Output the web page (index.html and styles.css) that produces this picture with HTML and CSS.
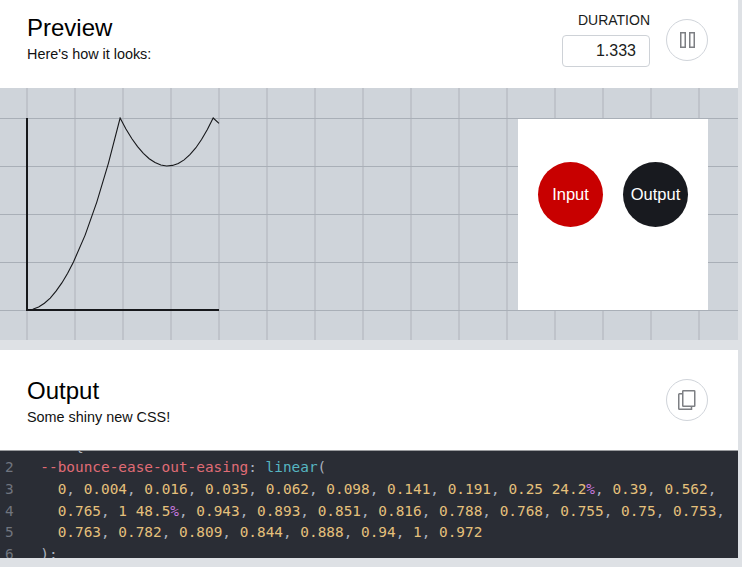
FILE: index.html
```html
<!DOCTYPE html>
<html lang="en">
<head>
<meta charset="utf-8">
<title>Preview</title>
<link rel="stylesheet" href="styles.css">
</head>
<body>
<main class="page">
  <section class="panel panel-preview">
    <header class="panel-head">
      <div class="heading">
        <h2>Preview</h2>
        <p>Here's how it looks:</p>
      </div>
      <div class="controls">
        <label class="duration">
          <span>DURATION</span>
          <input type="text" value="1.333">
        </label>
        <button class="round-btn" aria-label="Pause">
          <svg width="16" height="16" viewBox="0 0 16 16" fill="none" stroke="#7d7f83" stroke-width="1.5">
            <rect x="1.75" y="0.75" width="4.5" height="14.5"/>
            <rect x="10.75" y="0.75" width="4.5" height="14.5"/>
          </svg>
        </button>
      </div>
    </header>
    <div class="stage">
      <svg class="chart" width="194" height="194" viewBox="-1 -1 194 194" fill="none">
        <polyline class="curve" points="0,192 5.81,191.23 11.62,188.93 17.42,185.28 23.23,180.1 29.04,173.18 34.85,164.93 40.66,155.33 46.46,144 58.13,117.12 69.79,84.1 81.46,45.12 93.12,0 98.94,10.94 104.75,20.54 110.57,28.61 116.38,35.33 122.2,40.7 128.02,44.54 133.83,47.04 139.65,48 145.46,47.42 151.28,45.5 157.1,41.86 162.91,36.67 168.73,29.95 174.54,21.5 180.36,11.52 186.18,0 192,5.38"/>
        <path class="axes" d="M0 0V192H192"/>
      </svg>
      <div class="demo">
        <div class="ball ball-in">Input</div>
        <div class="ball ball-out">Output</div>
      </div>
    </div>
  </section>

  <section class="panel panel-output">
    <header class="panel-head panel-head-output">
      <div class="heading">
        <h2>Output</h2>
        <p>Some shiny new CSS!</p>
      </div>
      <button class="round-btn" aria-label="Copy">
        <svg width="20" height="22" viewBox="0 0 20 22" fill="none" stroke="#7d7f83" stroke-width="1.5">
          <rect x="5.75" y="1.75" width="12" height="15.5" rx="0.6"/>
          <path d="M5 4.75H2.5a0.75 0.75 0 0 0-.75.75V19.5a0.75 0.75 0 0 0 .75.75H14.5V18"/>
        </svg>
      </button>
    </header>
    <div class="code">
      <div class="code-scroll">
        <div class="line"><span class="num">1</span><span class="src"><span class="sel">:root</span> <span class="pun">{</span></span></div>
        <div class="line"><span class="num">2</span><span class="src">  <span class="prop">--bounce-ease-out-easing</span><span class="pun">:</span> <span class="fn">linear</span><span class="pun">(</span></span></div>
        <div class="line"><span class="num">3</span><span class="src">    <span class="val">0</span><span class="pun">,</span> <span class="val">0.004</span><span class="pun">,</span> <span class="val">0.016</span><span class="pun">,</span> <span class="val">0.035</span><span class="pun">,</span> <span class="val">0.062</span><span class="pun">,</span> <span class="val">0.098</span><span class="pun">,</span> <span class="val">0.141</span><span class="pun">,</span> <span class="val">0.191</span><span class="pun">,</span> <span class="val">0.25 24.2</span><span class="unit">%</span><span class="pun">,</span> <span class="val">0.39</span><span class="pun">,</span> <span class="val">0.562</span><span class="pun">,</span></span></div>
        <div class="line"><span class="num">4</span><span class="src">    <span class="val">0.765</span><span class="pun">,</span> <span class="val">1 48.5</span><span class="unit">%</span><span class="pun">,</span> <span class="val">0.943</span><span class="pun">,</span> <span class="val">0.893</span><span class="pun">,</span> <span class="val">0.851</span><span class="pun">,</span> <span class="val">0.816</span><span class="pun">,</span> <span class="val">0.788</span><span class="pun">,</span> <span class="val">0.768</span><span class="pun">,</span> <span class="val">0.755</span><span class="pun">,</span> <span class="val">0.75</span><span class="pun">,</span> <span class="val">0.753</span><span class="pun">,</span></span></div>
        <div class="line"><span class="num">5</span><span class="src">    <span class="val">0.763</span><span class="pun">,</span> <span class="val">0.782</span><span class="pun">,</span> <span class="val">0.809</span><span class="pun">,</span> <span class="val">0.844</span><span class="pun">,</span> <span class="val">0.888</span><span class="pun">,</span> <span class="val">0.94</span><span class="pun">,</span> <span class="val">1</span><span class="pun">,</span> <span class="val">0.972</span></span></div>
        <div class="line"><span class="num">6</span><span class="src">  <span class="pun">);</span></span></div>
      </div>
    </div>
  </section>
</main>
</body>
</html>
```

FILE: styles.css
```css
* { box-sizing: border-box; }

html, body {
  margin: 0;
  height: 100%;
  overflow: hidden;
  background: #dee1e5;
  font-family: "Liberation Sans", Arial, sans-serif;
  color: #000;
}

.page {
  display: flex;
  flex-direction: column;
  gap: 10px;
  width: 738px;
}

.panel-head {
  display: flex;
  justify-content: space-between;
  align-items: flex-start;
  height: 88px;
  padding: 12px 30px 0 27px;
  background: #fff;
}

.panel-head-output {
  height: 101px;
  padding-top: 25px;
  border-bottom: 1px solid #9a9c9f;
}

.heading h2 {
  margin: 0;
  font-size: 24px;
  font-weight: 400;
  line-height: 32px;
}

.heading p {
  margin: 0;
  font-size: 14.4px;
  line-height: 20px;
  color: #111;
}

.controls {
  display: flex;
  gap: 16px;
  align-items: center;
}

.duration {
  display: flex;
  flex-direction: column;
  align-items: flex-end;
  gap: 6px;
  font-size: 14px;
  line-height: 17px;
  color: #1a1c20;
}

.duration input {
  width: 88px;
  height: 32px;
  padding: 0 13px;
  border: 1px solid #ced2d7;
  border-radius: 4px;
  background: #fff;
  font: 16px "Liberation Sans", Arial, sans-serif;
  color: #1a1c20;
  text-align: right;
}

.round-btn {
  display: flex;
  align-items: center;
  justify-content: center;
  flex: none;
  width: 42px;
  height: 42px;
  padding: 0;
  border: 1.5px solid #d0d4da;
  border-radius: 50%;
  background: #fff;
}

.panel-head-output .round-btn { margin-top: 4px; }

.stage {
  display: flex;
  align-items: flex-start;
  justify-content: space-between;
  height: 252px;
  padding: 29px 30px 0 26px;
  background-color: #cfd4da;
  background-image:
    linear-gradient(to bottom, #a9afb7 0, #a9afb7 1px, transparent 1px),
    linear-gradient(to right, #bfc3ca 0, #bfc3ca 2px, transparent 2px);
  background-size: 48px 48px;
  background-position: 0 30px, 26px 0;
}

.chart { flex: none; }

.curve {
  stroke: #17181b;
  stroke-width: 1.1;
}

.axes {
  stroke: #17181b;
  stroke-width: 2;
}

.demo {
  display: flex;
  align-items: center;
  justify-content: center;
  gap: 20px;
  width: 190px;
  height: 191px;
  margin-top: 2px;
  padding-bottom: 40px;
  background: #fff;
}

.ball {
  display: flex;
  align-items: center;
  justify-content: center;
  width: 65px;
  height: 65px;
  border-radius: 50%;
  font-size: 16.5px;
  color: #fff;
}

.ball-in { background: #c80000; }
.ball-out { background: #181a1f; }

.code {
  height: 107px;
  overflow: hidden;
  background: #2a2d35;
  font: 14.4px/21.6px "DejaVu Sans Mono", monospace;
  color: #abb2bf;
}

.code-scroll { margin-top: -15.2px; }

.line {
  display: flex;
  white-space: pre;
}

.num {
  width: 23px;
  padding-left: 5px;
  flex: none;
  color: #70757f;
}

.src { color: #abb2bf; }
.sel { color: #d19a66; }
.prop { color: #e06c75; }
.fn { color: #56b6c2; }
.val { color: #e5c07b; }
.unit { color: #c678dd; }
.pun { color: #abb2bf; }
```
